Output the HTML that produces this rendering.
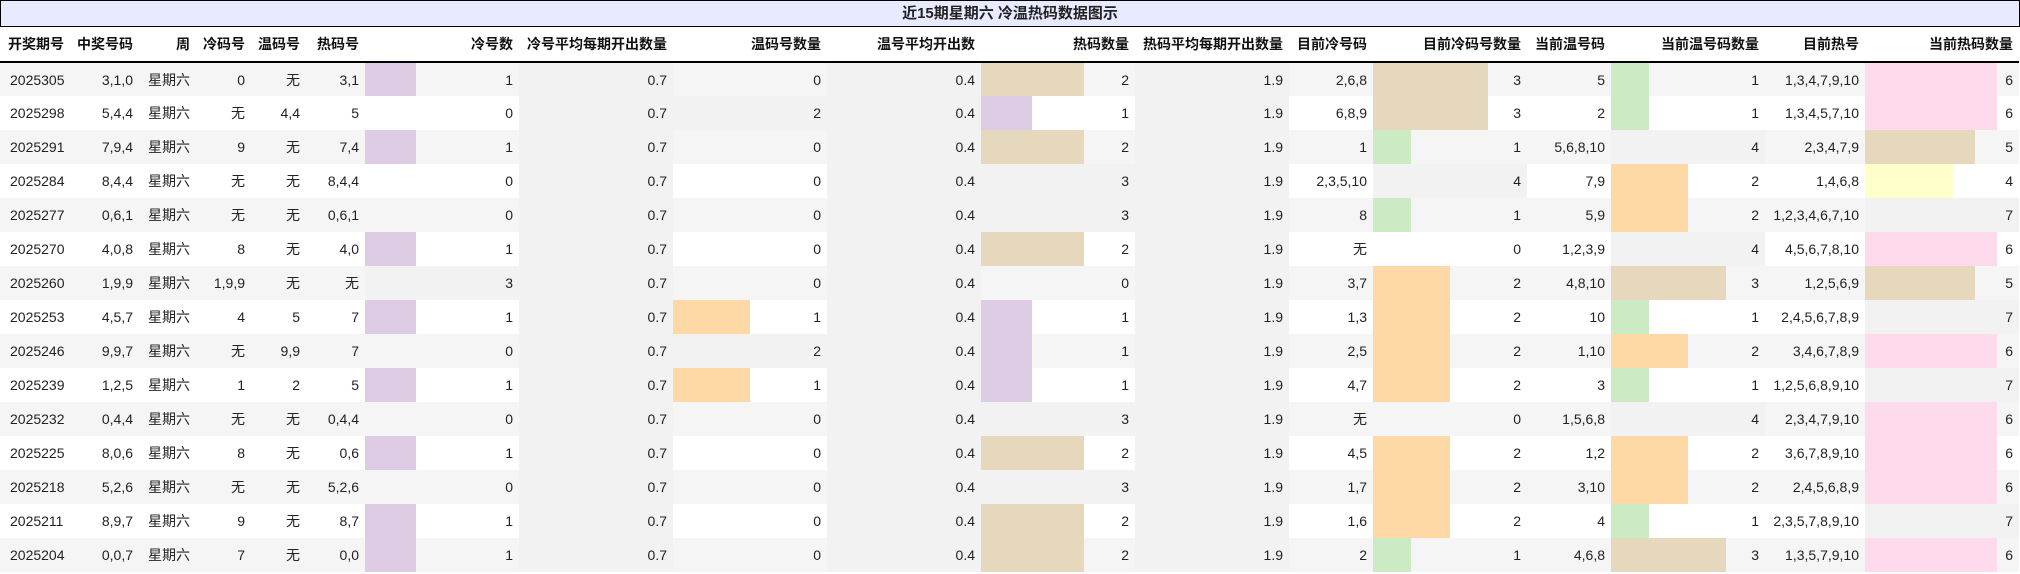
<!DOCTYPE html>
<html><head><meta charset="utf-8">
<style>
*{margin:0;padding:0;box-sizing:border-box}
html,body{width:2020px;height:574px;background:#fff;overflow:hidden}
body{font-family:"Liberation Sans","Noto Sans CJK SC",sans-serif;color:#222}
.title{height:27px;border:1px solid #000;background:#e8eaff;text-align:center;font-size:15px;font-weight:bold;line-height:25px;color:#222;width:2020px}
table{border-collapse:collapse;table-layout:fixed;width:2019px}
th{height:35px;font-size:14px;font-weight:bold;text-align:right;padding-right:6px;border-bottom:2px solid #000;color:#111;white-space:nowrap}
th:first-child{text-align:left;padding-left:8px}
td{height:34px;font-size:14px;text-align:right;padding-right:6px;white-space:nowrap}
td:first-child{text-align:left;padding-left:10px}
tbody tr:nth-child(odd){background:#f5f5f5}
tbody tr:nth-child(even){background:#fff}
.g{background:#f2f2f2}
.P{background:linear-gradient(90deg,#decbe4 var(--w),transparent var(--w))}
.O{background:linear-gradient(90deg,#fed9a6 var(--w),transparent var(--w))}
.T{background:linear-gradient(90deg,#e5d8bd var(--w),transparent var(--w))}
.G{background:linear-gradient(90deg,#ccebc5 var(--w),transparent var(--w))}
.Y{background:linear-gradient(90deg,#ffffcc var(--w),transparent var(--w))}
.K{background:linear-gradient(90deg,#fddaec var(--w),transparent var(--w))}
</style></head><body>
<div class="title">近15期星期六 冷温热码数据图示</div>
<table>
<colgroup><col style="width:73px"><col style="width:66px"><col style="width:57px"><col style="width:55px"><col style="width:55px"><col style="width:59px"><col style="width:154px"><col style="width:154px"><col style="width:154px"><col style="width:154px"><col style="width:154px"><col style="width:154px"><col style="width:84px"><col style="width:154px"><col style="width:84px"><col style="width:154px"><col style="width:100px"><col style="width:154px"></colgroup>
<thead><tr><th>开奖期号</th><th>中奖号码</th><th>周</th><th>冷码号</th><th>温码号</th><th>热码号</th><th>冷号数</th><th>冷号平均每期开出数量</th><th>温码号数量</th><th>温号平均开出数</th><th>热码数量</th><th>热码平均每期开出数量</th><th>目前冷号码</th><th>目前冷码号数量</th><th>当前温号码</th><th>当前温号码数量</th><th>目前热号</th><th>当前热码数量</th></tr></thead>
<tbody>
<tr><td>2025305</td><td>3,1,0</td><td>星期六</td><td>0</td><td>无</td><td>3,1</td><td class="P" style="--w:51px">1</td><td class="g">0.7</td><td>0</td><td class="g">0.4</td><td class="T" style="--w:103px">2</td><td class="g">1.9</td><td>2,6,8</td><td class="T" style="--w:115px">3</td><td>5</td><td class="G" style="--w:38px">1</td><td>1,3,4,7,9,10</td><td class="K" style="--w:132px">6</td></tr>
<tr><td>2025298</td><td>5,4,4</td><td>星期六</td><td>无</td><td>4,4</td><td>5</td><td>0</td><td class="g">0.7</td><td class="g">2</td><td class="g">0.4</td><td class="P" style="--w:51px">1</td><td class="g">1.9</td><td>6,8,9</td><td class="T" style="--w:115px">3</td><td>2</td><td class="G" style="--w:38px">1</td><td>1,3,4,5,7,10</td><td class="K" style="--w:132px">6</td></tr>
<tr><td>2025291</td><td>7,9,4</td><td>星期六</td><td>9</td><td>无</td><td>7,4</td><td class="P" style="--w:51px">1</td><td class="g">0.7</td><td>0</td><td class="g">0.4</td><td class="T" style="--w:103px">2</td><td class="g">1.9</td><td>1</td><td class="G" style="--w:38px">1</td><td>5,6,8,10</td><td class="g">4</td><td>2,3,4,7,9</td><td class="T" style="--w:110px">5</td></tr>
<tr><td>2025284</td><td>8,4,4</td><td>星期六</td><td>无</td><td>无</td><td>8,4,4</td><td>0</td><td class="g">0.7</td><td>0</td><td class="g">0.4</td><td class="g">3</td><td class="g">1.9</td><td>2,3,5,10</td><td class="g">4</td><td>7,9</td><td class="O" style="--w:77px">2</td><td>1,4,6,8</td><td class="Y" style="--w:88px">4</td></tr>
<tr><td>2025277</td><td>0,6,1</td><td>星期六</td><td>无</td><td>无</td><td>0,6,1</td><td>0</td><td class="g">0.7</td><td>0</td><td class="g">0.4</td><td class="g">3</td><td class="g">1.9</td><td>8</td><td class="G" style="--w:38px">1</td><td>5,9</td><td class="O" style="--w:77px">2</td><td>1,2,3,4,6,7,10</td><td class="g">7</td></tr>
<tr><td>2025270</td><td>4,0,8</td><td>星期六</td><td>8</td><td>无</td><td>4,0</td><td class="P" style="--w:51px">1</td><td class="g">0.7</td><td>0</td><td class="g">0.4</td><td class="T" style="--w:103px">2</td><td class="g">1.9</td><td>无</td><td>0</td><td>1,2,3,9</td><td class="g">4</td><td>4,5,6,7,8,10</td><td class="K" style="--w:132px">6</td></tr>
<tr><td>2025260</td><td>1,9,9</td><td>星期六</td><td>1,9,9</td><td>无</td><td>无</td><td class="g">3</td><td class="g">0.7</td><td>0</td><td class="g">0.4</td><td>0</td><td class="g">1.9</td><td>3,7</td><td class="O" style="--w:77px">2</td><td>4,8,10</td><td class="T" style="--w:115px">3</td><td>1,2,5,6,9</td><td class="T" style="--w:110px">5</td></tr>
<tr><td>2025253</td><td>4,5,7</td><td>星期六</td><td>4</td><td>5</td><td>7</td><td class="P" style="--w:51px">1</td><td class="g">0.7</td><td class="O" style="--w:77px">1</td><td class="g">0.4</td><td class="P" style="--w:51px">1</td><td class="g">1.9</td><td>1,3</td><td class="O" style="--w:77px">2</td><td>10</td><td class="G" style="--w:38px">1</td><td>2,4,5,6,7,8,9</td><td class="g">7</td></tr>
<tr><td>2025246</td><td>9,9,7</td><td>星期六</td><td>无</td><td>9,9</td><td>7</td><td>0</td><td class="g">0.7</td><td class="g">2</td><td class="g">0.4</td><td class="P" style="--w:51px">1</td><td class="g">1.9</td><td>2,5</td><td class="O" style="--w:77px">2</td><td>1,10</td><td class="O" style="--w:77px">2</td><td>3,4,6,7,8,9</td><td class="K" style="--w:132px">6</td></tr>
<tr><td>2025239</td><td>1,2,5</td><td>星期六</td><td>1</td><td>2</td><td>5</td><td class="P" style="--w:51px">1</td><td class="g">0.7</td><td class="O" style="--w:77px">1</td><td class="g">0.4</td><td class="P" style="--w:51px">1</td><td class="g">1.9</td><td>4,7</td><td class="O" style="--w:77px">2</td><td>3</td><td class="G" style="--w:38px">1</td><td>1,2,5,6,8,9,10</td><td class="g">7</td></tr>
<tr><td>2025232</td><td>0,4,4</td><td>星期六</td><td>无</td><td>无</td><td>0,4,4</td><td>0</td><td class="g">0.7</td><td>0</td><td class="g">0.4</td><td class="g">3</td><td class="g">1.9</td><td>无</td><td>0</td><td>1,5,6,8</td><td class="g">4</td><td>2,3,4,7,9,10</td><td class="K" style="--w:132px">6</td></tr>
<tr><td>2025225</td><td>8,0,6</td><td>星期六</td><td>8</td><td>无</td><td>0,6</td><td class="P" style="--w:51px">1</td><td class="g">0.7</td><td>0</td><td class="g">0.4</td><td class="T" style="--w:103px">2</td><td class="g">1.9</td><td>4,5</td><td class="O" style="--w:77px">2</td><td>1,2</td><td class="O" style="--w:77px">2</td><td>3,6,7,8,9,10</td><td class="K" style="--w:132px">6</td></tr>
<tr><td>2025218</td><td>5,2,6</td><td>星期六</td><td>无</td><td>无</td><td>5,2,6</td><td>0</td><td class="g">0.7</td><td>0</td><td class="g">0.4</td><td class="g">3</td><td class="g">1.9</td><td>1,7</td><td class="O" style="--w:77px">2</td><td>3,10</td><td class="O" style="--w:77px">2</td><td>2,4,5,6,8,9</td><td class="K" style="--w:132px">6</td></tr>
<tr><td>2025211</td><td>8,9,7</td><td>星期六</td><td>9</td><td>无</td><td>8,7</td><td class="P" style="--w:51px">1</td><td class="g">0.7</td><td>0</td><td class="g">0.4</td><td class="T" style="--w:103px">2</td><td class="g">1.9</td><td>1,6</td><td class="O" style="--w:77px">2</td><td>4</td><td class="G" style="--w:38px">1</td><td>2,3,5,7,8,9,10</td><td class="g">7</td></tr>
<tr><td>2025204</td><td>0,0,7</td><td>星期六</td><td>7</td><td>无</td><td>0,0</td><td class="P" style="--w:51px">1</td><td class="g">0.7</td><td>0</td><td class="g">0.4</td><td class="T" style="--w:103px">2</td><td class="g">1.9</td><td>2</td><td class="G" style="--w:38px">1</td><td>4,6,8</td><td class="T" style="--w:115px">3</td><td>1,3,5,7,9,10</td><td class="K" style="--w:132px">6</td></tr>
</tbody></table>
</body></html>
